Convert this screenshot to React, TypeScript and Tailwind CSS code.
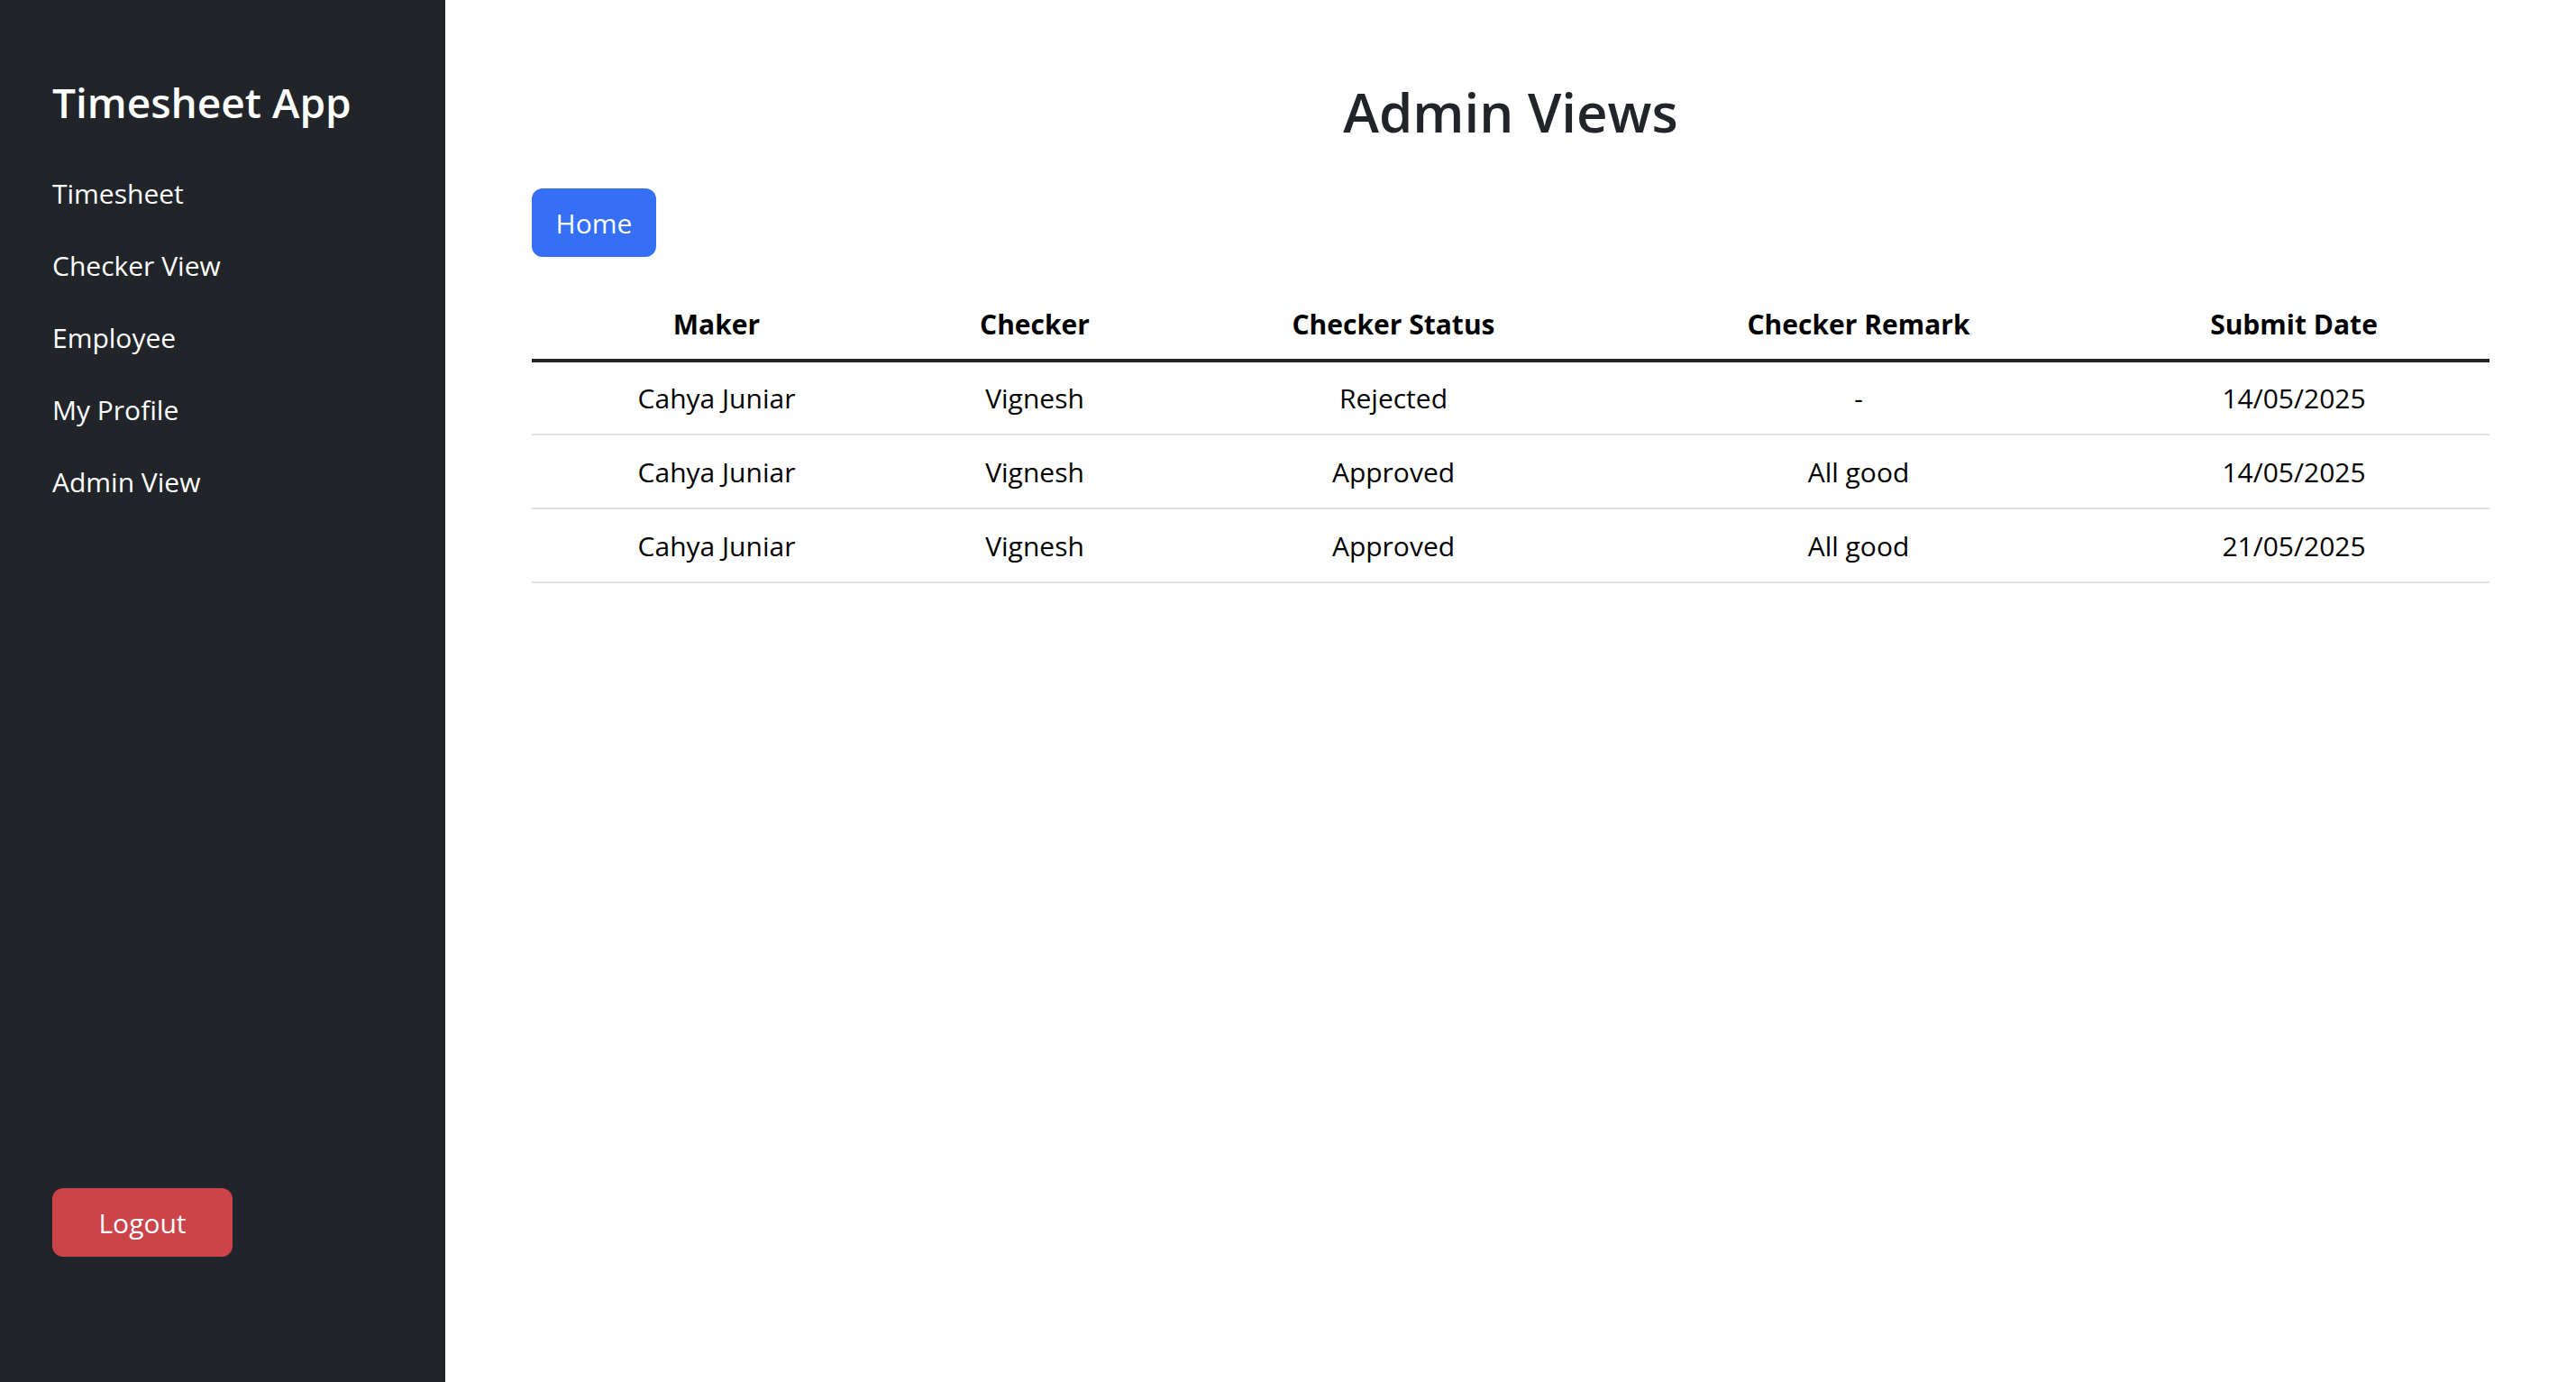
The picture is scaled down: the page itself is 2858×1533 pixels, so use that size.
import React from "react";

type Row = {
    maker: string;
    checker: string;
    status: string;
    remark: string;
    date: string;
};

const rows: Row[] = [
    { maker: "Cahya Juniar", checker: "Vignesh", status: "Rejected", remark: "-", date: "14/05/2025" },
    { maker: "Cahya Juniar", checker: "Vignesh", status: "Approved", remark: "All good", date: "14/05/2025" },
    { maker: "Cahya Juniar", checker: "Vignesh", status: "Approved", remark: "All good", date: "21/05/2025" },
];

const links = ["Timesheet", "Checker View", "Employee", "My Profile", "Admin View"];

const Sidebar: React.FC = () => {
    return (
        <aside className="w-[494px] shrink-0 h-screen bg-[#212529] text-white flex flex-col pl-[58px] pt-[84px] pb-[139px]">
            <p className="text-[46px] leading-[58px] font-semibold mb-[33px]">Timesheet App</p>
            <nav className="flex flex-col">
                {links.map((el) => {
                    return (
                        <a key={el} href="#" className="h-[80px] leading-[80px] text-[30px] text-white">
                            {el}
                        </a>
                    );
                })}
            </nav>
            <button className="mt-auto w-[200px] h-[76px] rounded-[12px] bg-[#cb444a] text-white text-[30px]">
                Logout
            </button>
        </aside>
    );
};

const App: React.FC = () => {
    return (
        <div className="flex w-full h-screen bg-white overflow-hidden" style={{ fontFamily: '"Open Sans", "Noto Sans", sans-serif' }}>
            <Sidebar></Sidebar>
            <main className="flex-1 flex flex-col px-[96px] pt-[86px]">
                <h2 className="text-center text-[60px] leading-[76px] font-semibold text-[#212529]">Admin Views</h2>
                <div className="mt-[47px]">
                    <button className="w-[138px] h-[76px] rounded-[12px] bg-[#356ff5] text-white text-[30px]">Home</button>
                </div>
                <table className="mt-[36px] w-full table-fixed border-collapse text-black text-[30px]">
                    <thead>
                        <tr className="border-b-4 border-[#212529]">
                            <th className="w-[410px] h-[79px] font-bold">Maker</th>
                            <th className="w-[296px] h-[79px] font-bold">Checker</th>
                            <th className="w-[500px] h-[79px] font-bold">Checker Status</th>
                            <th className="w-[532px] h-[79px] font-bold">Checker Remark</th>
                            <th className="h-[79px] font-bold">Submit Date</th>
                        </tr>
                    </thead>
                    <tbody>
                        {rows.map((el, i) => {
                            return (
                                <tr key={i} className="border-b-2 border-[#dee2e6]">
                                    <td className="h-[82px] text-center">{el.maker}</td>
                                    <td className="h-[82px] text-center">{el.checker}</td>
                                    <td className="h-[82px] text-center">{el.status}</td>
                                    <td className="h-[82px] text-center">{el.remark}</td>
                                    <td className="h-[82px] text-center">{el.date}</td>
                                </tr>
                            );
                        })}
                    </tbody>
                </table>
            </main>
        </div>
    );
};

export default App;
